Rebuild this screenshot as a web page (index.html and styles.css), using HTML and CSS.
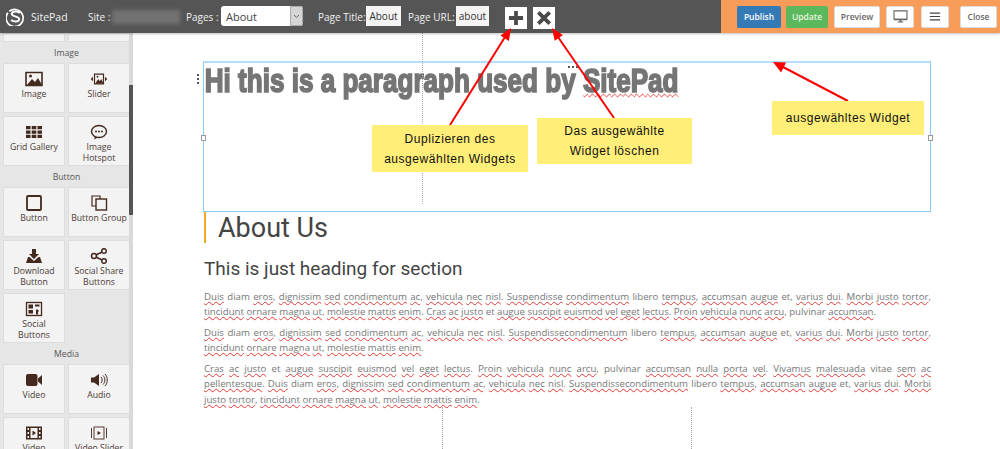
FILE: index.html
```html
<!DOCTYPE html>
<html lang="de">
<head>
<meta charset="utf-8">
<title>SitePad</title>
<link rel="stylesheet" href="styles.css">
</head>
<body>
<div class="app">
  <header class="topbar">
    <div class="bar-left">
      <svg class="logo" viewBox="0 0 20 20"><path d="M3.500 4.500A9 9 0 1 1 2 6" fill="none" stroke="#fff" stroke-width="1.800"/><path d="M14.500 6.500C12.500 4 7 4 6 7 5.200 10 14.300 9.600 14 13 13.500 16 7.500 16 5.500 13.500" fill="none" stroke="#fff" stroke-width="2"/></svg>
      <span class="brand">SitePad</span>
      <span class="lbl site-lbl">Site :</span>
      <span class="blurred"></span>
      <span class="lbl pages-lbl">Pages :</span>
      <div class="select"><span class="select-val">About</span><span class="select-btn"><svg width="7" height="5" viewBox="0 0 7 5"><path d="M1 1l2.500 2.500L6 1" fill="none" stroke="#666"/></svg></span></div>
      <span class="lbl title-lbl">Page Title:</span>
      <span class="field field-title">About</span>
      <span class="lbl url-lbl">Page URL:</span>
      <span class="field field-url">about</span>
      <span class="tool tool-plus"><svg width="16" height="16" viewBox="0 0 17 17"><path d="M8.500 1v15M1 8.500h15" stroke="#4a4a4a" stroke-width="4"/></svg></span>
      <span class="tool"><svg width="16" height="16" viewBox="0 0 17 17"><path d="M2.500 2.500l12 12M14.500 2.500l-12 12" stroke="#4a4a4a" stroke-width="4"/></svg></span>
    </div>
    <div class="bar-right">
      <span class="btn btn-publish">Publish</span>
      <span class="btn btn-update">Update</span>
      <span class="btn btn-white btn-preview">Preview</span>
      <span class="btn btn-white btn-icon"><svg width="15" height="13" viewBox="0 0 16 14"><path d="M1 1h14v9H1z" fill="none" stroke="#666" stroke-width="1.200"/><path d="M1 9.500h14V11H1zM5 12.500h6v1H5zM7 11h2v2H7z" fill="#666"/></svg></span>
      <span class="btn btn-white btn-icon btn-menu"><svg width="12" height="9" viewBox="0 0 14 10"><path d="M1 1h12M1 5h12M1 9h12" stroke="#444" stroke-width="1.300"/></svg></span>
      <span class="btn btn-white btn-close">Close</span>
    </div>
  </header>

  <div class="main">
    <aside class="sidebar">
      <div class="tiles tiles-top">
        <div class="tile"></div><div class="tile"></div>
      </div>
      <div class="group-title">Image</div>
      <div class="tiles">
        <div class="tile"><svg class="ico" viewBox="0 0 18 16"><path d="M1 1.500h16v13H1z" fill="none" stroke="#44291f" stroke-width="1.600"/><path d="M2 14l5-6 3 3 3-4 4 7z" fill="#44291f"/><circle cx="5.500" cy="5" r="1.500" fill="#44291f"/></svg><span>Image</span></div>
        <div class="tile"><svg class="ico" viewBox="0 0 24 16"><path d="M6 1.500h12v13H6z" fill="none" stroke="#44291f" stroke-width="1.600"/><path d="M7 14l4-6 2 3 2-3 3 6z" fill="#44291f"/><circle cx="10" cy="5" r="1.200" fill="#44291f"/><path d="M4 5v6L1 8zM20 5v6l3-3z" fill="#44291f"/></svg><span>Slider</span></div>
        <div class="tile"><svg class="ico" viewBox="0 0 18 16"><path d="M1 2h4.500v3.300H1zM6.700 2h4.600v3.300H6.700zM12.500 2H17v3.300h-4.500zM1 6.400h4.500v3.300H1zM6.700 6.400h4.600v3.300H6.700zM12.500 6.400H17v3.300h-4.500zM1 10.800h4.500v3.300H1zM6.700 10.800h4.600v3.300H6.700zM12.500 10.800H17v3.300h-4.500z" fill="#44291f"/></svg><span>Grid Gallery</span></div>
        <div class="tile"><svg class="ico" viewBox="0 0 18 16"><ellipse cx="9" cy="7.500" rx="7.500" ry="6" fill="none" stroke="#44291f" stroke-width="1.400"/><path d="M5 12.500L4 15.500 8 13.500" fill="#44291f"/><circle cx="6" cy="7.500" r="1" fill="#44291f"/><circle cx="9" cy="7.500" r="1" fill="#44291f"/><circle cx="12" cy="7.500" r="1" fill="#44291f"/></svg><span>Image<br>Hotspot</span></div>
      </div>
      <div class="group-title">Button</div>
      <div class="tiles">
        <div class="tile"><svg class="ico" viewBox="0 0 18 16"><rect x="2" y="1" width="14" height="14" rx="1" fill="none" stroke="#44291f" stroke-width="1.800"/></svg><span>Button</span></div>
        <div class="tile"><svg class="ico" viewBox="0 0 18 16"><path d="M10 4V1H2v10h4" fill="none" stroke="#44291f" stroke-width="1.200"/><rect x="6" y="4" width="10.500" height="11" fill="none" stroke="#44291f" stroke-width="1.400"/></svg><span>Button Group</span></div>
        <div class="tile"><svg class="ico" viewBox="0 0 18 16"><path d="M7 1h4v5h3l-5 5-5-5h3z" fill="#44291f"/><path d="M1 15l2-6h1.500L9 13l4.500-4H15l2 6z" fill="#44291f"/></svg><span>Download<br>Button</span></div>
        <div class="tile"><svg class="ico" viewBox="0 0 18 16"><circle cx="4" cy="8" r="2.500" fill="none" stroke="#44291f" stroke-width="1.500"/><circle cx="14" cy="3" r="2.300" fill="none" stroke="#44291f" stroke-width="1.500"/><circle cx="14" cy="13" r="2.300" fill="none" stroke="#44291f" stroke-width="1.500"/><path d="M6 7l6-3M6 9l6 3" stroke="#44291f" stroke-width="1.500"/></svg><span>Social Share<br>Buttons</span></div>
        <div class="tile"><svg class="ico" viewBox="0 0 18 16"><rect x="1.500" y="1.500" width="15" height="13" fill="none" stroke="#44291f" stroke-width="1.300"/><path d="M3.500 3.500h4.500v4H3.500zM10 3.500h4.500v2H10zM3.500 9h4.500v3.500H3.500zM11 8.500h2v1h1v1h-1v3h-2z" fill="#44291f"/></svg><span>Social<br>Buttons</span></div>
      </div>
      <div class="group-title">Media</div>
      <div class="tiles">
        <div class="tile"><svg class="ico" viewBox="0 0 18 16"><rect x="1" y="2" width="11.500" height="12" rx="2" fill="#44291f"/><path d="M13 6.500L17 3v10l-4-3.500z" fill="#44291f"/></svg><span>Video</span></div>
        <div class="tile"><svg class="ico" viewBox="0 0 18 16"><path d="M1 5.500h3L9 2v12L4 10.500H1z" fill="#44291f"/><path d="M11 5c1.500 1.500 1.500 4.500 0 6M13 3.500c2.500 2.500 2.500 6.500 0 9M15 2c3 3 3 9 0 12" fill="none" stroke="#44291f" stroke-width="1"/></svg><span>Audio</span></div>
        <div class="tile"><svg class="ico" viewBox="0 0 18 16"><path fill-rule="evenodd" d="M1 1.500h16v13H1zM2.500 3v2h1.500V3zM2.500 7v2h1.500V7zM2.500 11v2h1.500v-2zM14 3v2h1.500V3zM14 7v2h1.500V7zM14 11v2h1.500v-2zM5.500 3v10h7V3zM7.500 5.500l3.500 2.500-3.500 2.500z" fill="#44291f"/></svg><span>Video</span></div>
        <div class="tile"><svg class="ico" viewBox="0 0 18 16"><rect x="4" y="2" width="10" height="12" fill="none" stroke="#44291f" stroke-width=".9"/><path d="M1.500 3v10M16.500 3v10" stroke="#44291f" stroke-width=".9"/><path d="M7.500 6l3.500 2-3.500 2z" fill="#44291f"/></svg><span>Video Slider</span></div>
      </div>
      <div class="scrollbar"><div class="scroll-thumb"></div></div>
    </aside>

    <main class="canvas">
      <section class="selected">
        <p class="big">Hi this is a paragraph used by <span class="sp">SitePad</span></p>
        <i class="handle handle-l"></i>
        <i class="handle handle-r"></i>
        <i class="drag"></i>
        <i class="more"></i>
      </section>
      <h1 class="about">About Us</h1>
      <h2 class="sub">This is just heading for section</h2>
      <p class="copy"><span class="sp">Duis</span> diam <span class="sp">eros</span>, <span class="sp">dignissim</span> <span class="sp">sed</span> <span class="sp">condimentum</span> <span class="sp">ac</span>, <span class="sp">vehicula</span> <span class="sp">nec</span> <span class="sp">nisl</span>. <span class="sp">Suspendisse</span> <span class="sp">condimentum</span> libero <span class="sp">tempus</span>, <span class="sp">accumsan</span> <span class="sp">augue</span> et, <span class="sp">varius</span> <span class="sp">dui</span>. <span class="sp">Morbi</span> <span class="sp">justo</span> <span class="sp">tortor</span>, <span class="sp">tincidunt</span> <span class="sp">ornare</span> <span class="sp">magna</span> <span class="sp">ut</span>, <span class="sp">molestie</span> <span class="sp">mattis</span> <span class="sp">enim</span>. <span class="sp">Cras</span> <span class="sp">ac</span> <span class="sp">justo</span> et <span class="sp">augue</span> <span class="sp">suscipit</span> <span class="sp">euismod</span> <span class="sp">vel</span> <span class="sp">eget</span> <span class="sp">lectus</span>. <span class="sp">Proin</span> <span class="sp">vehicula</span> <span class="sp">nunc</span> <span class="sp">arcu</span>, pulvinar <span class="sp">accumsan</span>.</p>
      <p class="copy"><span class="sp">Duis</span> diam <span class="sp">eros</span>, <span class="sp">dignissim</span> <span class="sp">sed</span> <span class="sp">condimentum</span> <span class="sp">ac</span>, <span class="sp">vehicula</span> <span class="sp">nec</span> <span class="sp">nisl</span>. <span class="sp">Suspendissecondimentum</span> libero <span class="sp">tempus</span>, <span class="sp">accumsan</span> <span class="sp">augue</span> et, <span class="sp">varius</span> <span class="sp">dui</span>. <span class="sp">Morbi</span> <span class="sp">justo</span> <span class="sp">tortor</span>, <span class="sp">tincidunt</span> <span class="sp">ornare</span> <span class="sp">magna</span> <span class="sp">ut</span>, <span class="sp">molestie</span> <span class="sp">mattis</span> <span class="sp">enim</span>.</p>
      <p class="copy"><span class="sp">Cras</span> <span class="sp">ac</span> <span class="sp">justo</span> et <span class="sp">augue</span> <span class="sp">suscipit</span> <span class="sp">euismod</span> <span class="sp">vel</span> <span class="sp">eget</span> <span class="sp">lectus</span>. <span class="sp">Proin</span> <span class="sp">vehicula</span> <span class="sp">nunc</span> <span class="sp">arcu</span>, pulvinar <span class="sp">accumsan</span> <span class="sp">nulla</span> <span class="sp">porta</span> <span class="sp">vel</span>. <span class="sp">Vivamus</span> <span class="sp">malesuada</span> vitae <span class="sp">sem</span> <span class="sp">ac</span> <span class="sp">pellentesque</span>. <span class="sp">Duis</span> diam <span class="sp">eros</span>, <span class="sp">dignissim</span> <span class="sp">sed</span> <span class="sp">condimentum</span> <span class="sp">ac</span>, <span class="sp">vehicula</span> <span class="sp">nec</span> <span class="sp">nisl</span>. <span class="sp">Suspendissecondimentum</span> libero <span class="sp">tempus</span>, <span class="sp">accumsan</span> <span class="sp">augue</span> et, <span class="sp">varius</span> <span class="sp">dui</span>. <span class="sp">Morbi</span> <span class="sp">justo</span> <span class="sp">tortor</span>, <span class="sp">tincidunt</span> <span class="sp">ornare</span> <span class="sp">magna</span> <span class="sp">ut</span>, <span class="sp">molestie</span> <span class="sp">mattis</span> <span class="sp">enim</span>.</p>
    </main>
  </div>

  <i class="guide guide-a"></i>
  <i class="guide guide-b"></i>
  <i class="guide guide-c"></i>

  <svg class="arrows" viewBox="0 0 1000 449">
    <path d="M450 125L505 37M614 118L558 37M848 101L783 67" fill="none" stroke="#f00" stroke-width="2"/>
    <path d="M511 28L508.900 40.900 500.400 35.500zM552 28L562.900 35 554.700 40.800zM773 62L786.100 62.600 781.100 72.400z" fill="#f00"/>
  </svg>
  <div class="note note-dup">Duplizieren des<br>ausgewählten Widgets</div>
  <div class="note note-del">Das ausgewählte<br>Widget löschen</div>
  <div class="note note-sel">ausgewähltes Widget</div>
</div>
</body>
</html>
```
FILE: styles.css
```css
* { box-sizing: border-box; }
html, body { margin: 0; padding: 0; background: #fff; }
.app { position: relative; width: 1000px; height: 449px; overflow: hidden; display: flex; flex-direction: column; font-family: "Open Sans", sans-serif; }

.topbar { flex: 0 0 33px; display: flex; height: 33px; position: relative; z-index: 2; box-shadow: 0 1px 2px rgba(0,0,0,.25); }
.bar-left { flex: 0 0 721px; background: #555; display: flex; align-items: center; padding-left: 6px; color: #f0f0f0; font-size: 10px; }
.bar-right { flex: 1; background: #f89c59; display: flex; align-items: center; padding-left: 16px; }
.logo { width: 19px; height: 19px; flex: none; margin-top: -1px; }
.brand { margin-left: 6px; width: 57px; font-size: 10.500px; }
.lbl { white-space: nowrap; }
.site-lbl { width: 24px; }
.blurred { width: 68px; height: 14px; background: #727272; filter: blur(2px); }
.pages-lbl { margin-left: 6px; width: 35px; }
.select { width: 82px; height: 20px; background: #fff; border-radius: 3px; display: flex; color: #444; font-size: 11px; align-items: stretch; margin-top: -1px; }
.select-val { flex: 1; padding-left: 5px; line-height: 21px; }
.select-btn { width: 13px; background: #d5d5d5; border: 1px solid #aaa; border-radius: 0 3px 3px 0; display: flex; align-items: center; justify-content: center; }
.title-lbl { margin-left: 15px; width: 48px; }
.url-lbl { margin-left: 7px; width: 48px; }
.field { background: #f4f4f4; color: #333; height: 20px; line-height: 20px; font-size: 10px; margin-top: -1px; text-align: center; }
.field-title { width: 35px; }
.field-url { width: 33px; }
.tool { width: 22px; height: 22px; background: #fff; display: flex; align-items: center; justify-content: center; margin-left: 6px; margin-top: 2px; }
.tool-plus { margin-left: 16px; }
.btn { height: 22px; display: flex; align-items: center; justify-content: center; border-radius: 2px; font-size: 8.500px; font-weight: 600; white-space: nowrap; }
.btn-publish { width: 44px; background: #337ab7; color: #fff; }
.btn-update { width: 42px; margin-left: 5px; background: #5cb85c; color: #e8f5e0; }
.btn-white { background: #fff; color: #666; border: 1px solid #ddd; }
.btn-preview { width: 46px; margin-left: 6px; }
.btn-icon { width: 28px; margin-left: 6px; }
.btn-menu { margin-left: 7px; }
.btn-close { width: 37px; margin-left: 11px; }

.main { flex: 1; display: flex; min-height: 0; }
.sidebar { flex: 0 0 133px; background: #e6e6e6; position: relative; overflow: hidden; padding: 0 3px; }
.tiles { display: grid; grid-template-columns: 62px 62px; grid-auto-rows: 50px; gap: 3px; }
.tiles-top { grid-auto-rows: 9px; }
.group-title { height: 21px; line-height: 23px; text-align: center; font-size: 8.700px; color: #555; }
.tile { background: #f3f3f3; border: 1px solid #ddd; display: flex; flex-direction: column; align-items: center; padding-top: 6.500px; font-size: 8.700px; line-height: 11.500px; color: #4b3a33; text-align: center; white-space: nowrap; }
.ico { width: 18px; height: 16px; flex: none; margin-bottom: 2px; }
.scrollbar { position: absolute; top: 0; bottom: 0; right: 0; width: 4px; background: #d9d9d9; }
.scroll-thumb { margin-top: 52px; height: 130px; background: #555; }

.canvas { flex: 1; padding: 28px 69px 0 70px; min-width: 0; }
.selected { position: relative; height: 151px; border: 1px solid #8ac9f8; border-top: 2px solid #b5defc; }
.big { margin: 0; padding-left: 1px; font: bold 33px/36px "Liberation Sans", sans-serif; color: #757575; -webkit-text-stroke: 1.700px #757575; white-space: nowrap; transform: scaleX(.79); transform-origin: left center; }
.handle { position: absolute; top: 72px; width: 5px; height: 6px; background: #fff; border: 1px solid #999; }
.handle-l { left: -3px; }
.handle-r { right: -3px; }
.drag { position: absolute; left: -7px; top: 11px; width: 0; height: 10px; border-left: 2px dotted #555; }
.more { position: absolute; left: 364px; top: 3px; width: 10px; height: 0; border-top: 2px dotted #555; }
.about { margin: 0 0 0 1px; height: 31px; border-left: 2px solid #f5a623; padding-left: 12px; font: 400 27px/32px Roboto, sans-serif; color: #444; }
.sub { margin: 14px 0 0 1px; font: 400 19px/24px Roboto, sans-serif; color: #444; height: 24px; }
.copy { margin: 0 0 5px 1px; font-size: 9.650px; line-height: 15.500px; color: #777; text-align: justify; }
.sub + .copy { margin-top: 7.500px; }
.sp { text-decoration: underline wavy #e53935 1px; text-decoration-skip-ink: none; }

.guide { position: absolute; width: 0; border-left: 1px dotted #aaa; }
.guide-a { left: 422px; top: 33px; height: 171px; }
.guide-b { left: 442px; top: 407px; height: 42px; }
.guide-c { left: 691px; top: 407px; height: 42px; }

.arrows { position: absolute; inset: 0; width: 1000px; height: 449px; z-index: 3; pointer-events: none; }
.note { position: absolute; z-index: 4; background: #ffee78; color: #111; font: 12px/20px "Liberation Sans", sans-serif; letter-spacing: .55px; text-align: center; display: flex; align-items: center; justify-content: center; }
.note-dup { left: 372px; top: 125px; width: 156px; height: 47px; }
.note-del { left: 537px; top: 118px; width: 155px; height: 46px; }
.note-sel { left: 772px; top: 101px; width: 152px; height: 34px; }
```
